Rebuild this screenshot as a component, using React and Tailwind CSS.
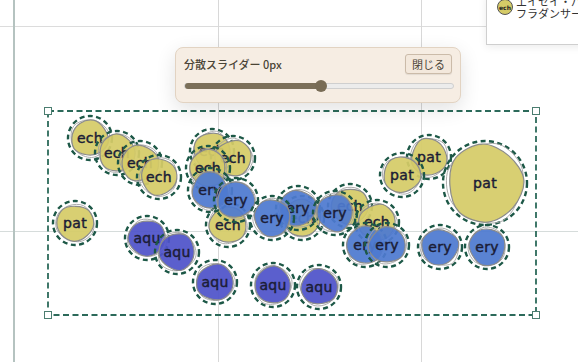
import React from 'react';

const FILL = {
  ech: '#d5cb67',
  pat: '#d5cb67',
  ery: '#4e7ad0',
  aqu: '#4f53c9',
};

// wobbly closed outline, catmull-rom smoothed into cubic beziers
const blobPath = (c, r, seed) => {
  const n = 8;
  const pts = [];
  for (let i = 0; i < n; i++) {
    const a = (i / n) * Math.PI * 2 + seed * 0.4;
    const rr = r * (1 + 0.045 * Math.sin(seed * 1.7 + i * 2.3) + 0.03 * Math.cos(seed * 3.1 + i * 1.3));
    pts.push([c + rr * Math.cos(a), c + rr * Math.sin(a)]);
  }
  let d = `M${pts[0][0].toFixed(2)},${pts[0][1].toFixed(2)}`;
  for (let i = 0; i < n; i++) {
    const p0 = pts[(i - 1 + n) % n];
    const p1 = pts[i];
    const p2 = pts[(i + 1) % n];
    const p3 = pts[(i + 2) % n];
    const c1 = [p1[0] + (p2[0] - p0[0]) / 6, p1[1] + (p2[1] - p0[1]) / 6];
    const c2 = [p2[0] - (p3[0] - p1[0]) / 6, p2[1] - (p3[1] - p1[1]) / 6];
    d += ` C${c1[0].toFixed(2)},${c1[1].toFixed(2)} ${c2[0].toFixed(2)},${c2[1].toFixed(2)} ${p2[0].toFixed(2)},${p2[1].toFixed(2)}`;
  }
  return d + 'Z';
};

const nodes = [
  ['ech', 90, 138],
  ['ech', 117, 153],
  ['ech', 140, 163],
  ['ech', 159, 177],
  ['pat', 75, 223],
  ['ech', 212, 151],
  ['ech', 233, 158],
  ['ech', 208, 168],
  ['ech', 228, 225],
  ['ery', 210, 190],
  ['ery', 236, 200],
  ['ech', 302, 218],
  ['ery', 298, 208],
  ['ery', 272, 218],
  ['ech', 350, 206],
  ['ery', 335, 213],
  ['ech', 377, 222],
  ['ery', 365, 245],
  ['ery', 387, 245],
  ['pat', 429, 157],
  ['pat', 402, 175],
  ['pat', 485, 183, 38],
  ['ery', 440, 247],
  ['ery', 487, 247],
  ['aqu', 147, 238],
  ['aqu', 177, 252],
  ['aqu', 215, 282],
  ['aqu', 273, 285],
  ['aqu', 319, 287],
];

const Node = ({ kind, x, y, r = 18, seed }) => {
  const ring = r + 4;
  const half = ring + 3;
  const size = half * 2;
  return (
    <div
      className="absolute flex items-center justify-center"
      style={{ left: x - half, top: y - half, width: size, height: size }}
    >
      <svg width={size} height={size} className="absolute inset-0">
        <circle cx={half} cy={half} r={ring} fill="none" stroke="#1d5847" strokeWidth="2.4" strokeDasharray="5 3.4" />
        <path d={blobPath(half, r + 1, seed + 5)} fill="none" stroke="#a3a3a3" strokeWidth="0.9" />
        <path d={blobPath(half, r, seed)} fill={FILL[kind]} fillOpacity="0.93" stroke="#8b8b8b" strokeWidth="1.2" />
      </svg>
      <span className="relative text-[14px] leading-none tracking-[0.3px] text-[#1b1d36] [-webkit-text-stroke:0.45px_#1b1d36] font-['Comic_Sans_MS','DejaVu_Sans',sans-serif]">
        {kind}
      </span>
    </div>
  );
};

export default function App() {
  return (
    <div className="relative w-[578px] h-[362px] overflow-hidden bg-white font-['Noto_Sans_CJK_JP',sans-serif]">
      {/* canvas grid */}
      <div className="absolute left-0 right-0 top-[26px] h-px bg-[#dcdcdc]" />
      <div className="absolute left-0 right-0 top-[231px] h-px bg-[#d6dcdb]" />
      <div className="absolute top-0 bottom-0 left-[13px] w-[1.5px] bg-[#b5c3c0]" />
      <div className="absolute top-0 bottom-0 left-[218px] w-px bg-[#d8d8d8]" />
      <div className="absolute top-0 bottom-0 left-[421px] w-px bg-[#d8d8d8]" />

      {/* legend */}
      <div className="absolute left-[486px] top-[-6px] w-[110px] h-[51px] bg-white border border-[#cfcfcf] shadow-[0_2px_8px_rgba(0,0,0,0.08)] pl-[10px]">
        <div className="flex items-start gap-[3px]">
          <div className="mt-[4px] w-[16px] h-[16px] shrink-0 rounded-full bg-[#d5cb67] border border-[#555] flex items-center justify-center text-[6px] font-bold text-[#222] font-['DejaVu_Sans',sans-serif]">
            ech
          </div>
          <div className="text-[11px] leading-[12px] text-[#333] whitespace-nowrap">
            <div>エイセイ・パール</div>
            <div>フラダンサー (</div>
          </div>
        </div>
      </div>

      {nodes.map(([kind, x, y, r], i) => (
        <Node key={i} kind={kind} x={x} y={y} r={r} seed={i * 1.37 + 0.5} />
      ))}

      {/* selection box */}
      <svg className="absolute left-[46px] top-[109px]" width="492" height="208">
        <rect x="2" y="2" width="488" height="204" fill="none" stroke="#2c6a5a" strokeWidth="1.8" strokeDasharray="6 3.5" />
      </svg>
      {[
        [48, 111],
        [536, 111],
        [48, 315],
        [536, 315],
      ].map(([hx, hy], i) => (
        <div
          key={i}
          className="absolute w-[8px] h-[8px] bg-white border border-[#4b7d70]"
          style={{ left: hx - 4, top: hy - 4 }}
        />
      ))}

      {/* spread slider */}
      <div className="absolute left-[175px] top-[47px] w-[286px] h-[56px] rounded-[8px] bg-[#f6ede3] border border-[#e2d3c2] shadow-[0_6px_20px_rgba(0,0,0,0.12)] px-[8px] pt-[6px]">
        <div className="flex items-center justify-between">
          <span className="text-[11px] font-medium text-[#4a4436]">分散スライダー 0px</span>
          <button className="h-[20px] px-[6px] rounded-[3px] bg-[#f3e8dc] border border-[#cbbba9] text-[11px] text-[#4a4436] shadow-[0_1px_1px_rgba(0,0,0,0.08)]">
            閉じる
          </button>
        </div>
        <div className="relative mt-[9px] mr-[-2px] h-[6px] rounded-full bg-[#ececec] border border-[#cfcfcf]">
          <div className="absolute left-0 top-[-1px] h-[6px] w-[136px] rounded-full bg-[#7b6f59]" />
          <div className="absolute left-[130px] top-[-4px] w-[12px] h-[12px] rounded-full bg-[#786c56]" />
        </div>
      </div>
    </div>
  );
}
